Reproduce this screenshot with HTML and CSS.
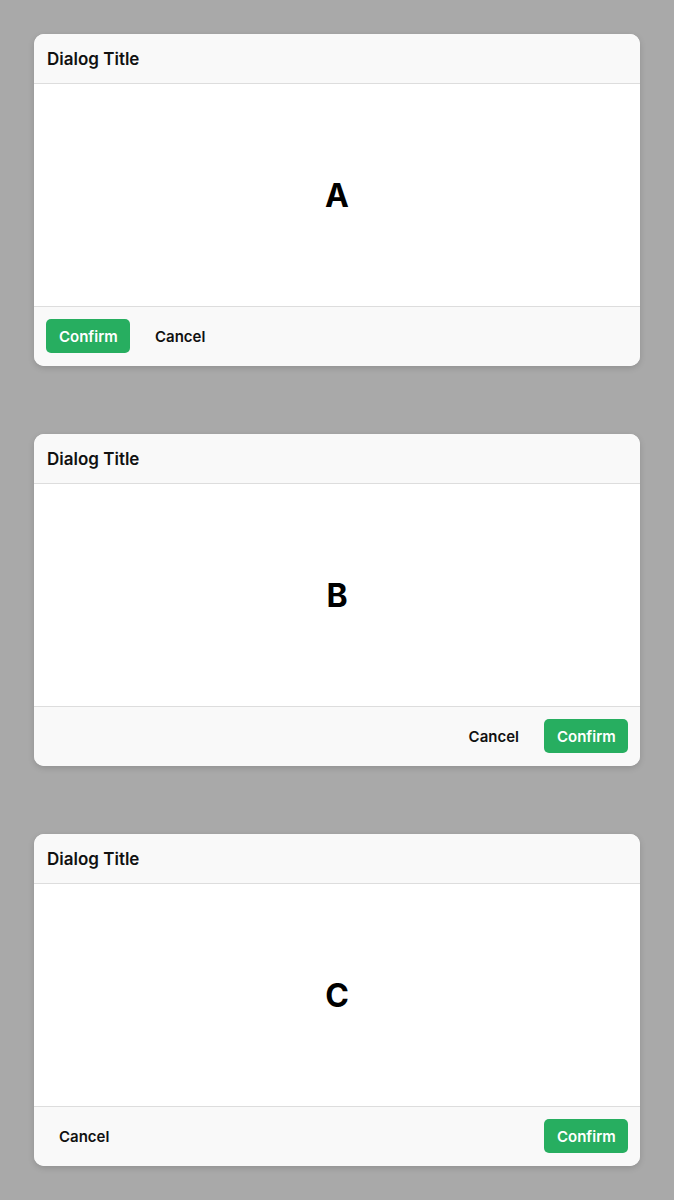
FILE: index.html
```html
<!DOCTYPE html>
<html>
<head>
  <meta charset="utf-8">
  <link rel="stylesheet" href="styles.css">
</head>
<body>
  <div class="dialog">
    <div class="dialog-header">Dialog Title</div>
    <div class="dialog-body">A</div>
    <div class="dialog-footer">
      <button class="btn btn-primary">Confirm</button>
      <button class="btn">Cancel</button>
    </div>
  </div>

  <div class="dialog">
    <div class="dialog-header">Dialog Title</div>
    <div class="dialog-body">B</div>
    <div class="dialog-footer end">
      <button class="btn">Cancel</button>
      <button class="btn btn-primary">Confirm</button>
    </div>
  </div>

  <div class="dialog">
    <div class="dialog-header">Dialog Title</div>
    <div class="dialog-body">C</div>
    <div class="dialog-footer split">
      <button class="btn">Cancel</button>
      <button class="btn btn-primary">Confirm</button>
    </div>
  </div>
</body>
</html>
```

FILE: styles.css
```css
body {
  margin: 0;
  padding: 34px;
  background: #a9a9a9;
  font-family: Inter, "Noto Sans", sans-serif;
  color: #111;
  display: flex;
  flex-direction: column;
  gap: 68px;
}

.dialog {
  background: #fff;
  border-radius: 10px;
  overflow: hidden;
  box-shadow: 0 2px 6px rgba(0, 0, 0, .15);
}

.dialog-header {
  height: 49px;
  padding: 0 13px;
  display: flex;
  align-items: center;
  background: #f9f9f9;
  border-bottom: 1px solid #ddd;
  font-size: 17px;
  font-weight: 600;
}

.dialog-body {
  height: 222px;
  display: flex;
  align-items: center;
  justify-content: center;
  font-size: 32px;
  font-weight: 700;
  color: #000;
}

.dialog-footer {
  display: flex;
  gap: 12px;
  padding: 12px 12px 13px;
  background: #f9f9f9;
  border-top: 1px solid #ddd;
}

.dialog-footer.end {
  justify-content: flex-end;
}

.dialog-footer.split {
  justify-content: space-between;
}

.btn {
  height: 34px;
  padding: 0 13px;
  border: none;
  border-radius: 5px;
  background: transparent;
  font-family: inherit;
  font-size: 15px;
  font-weight: 600;
  color: #111;
}

.btn-primary {
  background: #27ae60;
  color: #fff;
  width: 84px;
}
```
